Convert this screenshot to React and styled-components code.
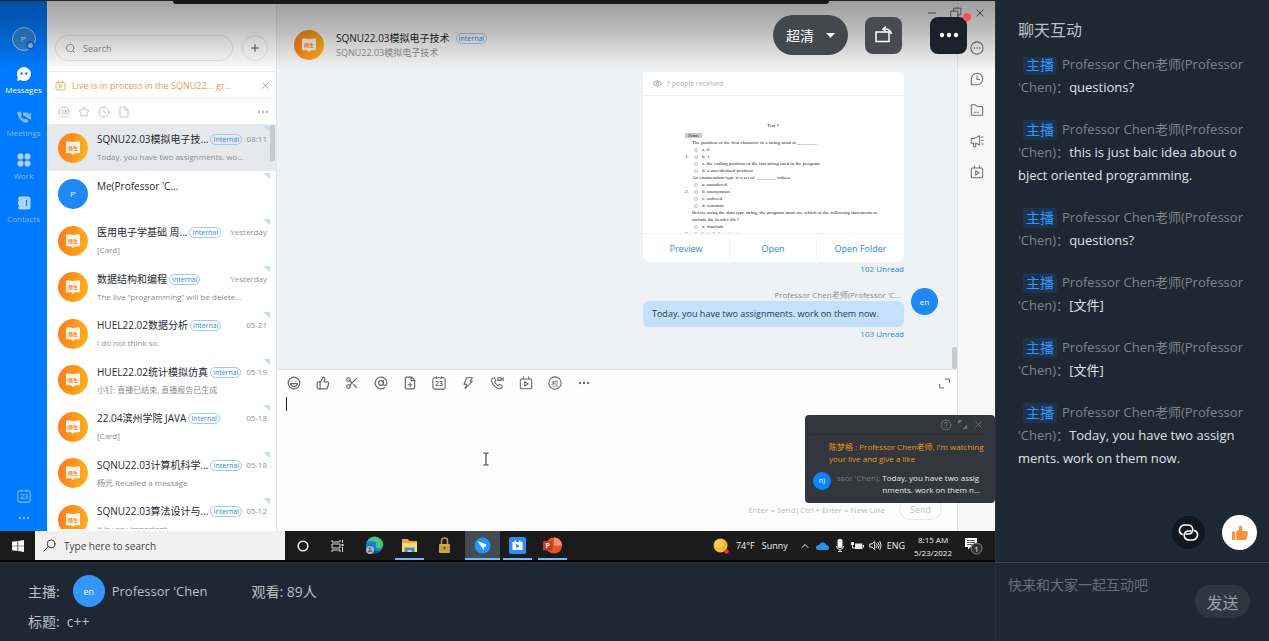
import styled, { createGlobalStyle, css } from "styled-components";
import {
  AtSign,
  ChevronUp,
  Clock,
  File,
  FilePlus,
  Laugh,
  Minus,
  MoreHorizontal,
  Plus,
  Scissors,
  Search,
  Star,
  ThumbsUp,
  X,
} from "lucide-react";

const GlobalStyle = createGlobalStyle`
  * {
    box-sizing: border-box;
  }
  body {
    margin: 0;
    background: #1e2832;
    font-family: "Open Sans", "Noto Sans CJK SC", sans-serif;
  }
  button, input, textarea {
    font-family: inherit;
    margin: 0;
  }
  svg {
    display: block;
    flex: none;
  }
`;

const Page = styled.div`
  display: grid;
  grid-template-columns: minmax(0, 1fr) 274px;
  grid-template-rows: minmax(0, 1fr);
  height: 100vh;
`;

const Main = styled.main`
  display: flex;
  flex-direction: column;
  min-width: 0;
`;

const IconButton = styled.button`
  display: flex;
  align-items: center;
  justify-content: center;
  padding: 0;
  border: 0;
  background: none;
  color: inherit;
  cursor: pointer;
`;

/* video */

const Video = styled.section`
  position: relative;
  flex: 1;
  min-height: 0;
  display: flex;
  flex-direction: column;
  border-top: 1px solid #222;
  border-bottom: 2px solid #050505;
`;

const Desktop = styled.div`
  flex: 1;
  min-height: 0;
  display: flex;
  background: #fdfdfd;
`;

const Shade = styled.div`
  position: absolute;
  inset: 0 0 auto;
  height: 70px;
  background: linear-gradient(rgba(0, 0, 0, 0.36), rgba(0, 0, 0, 0.24) 40%, rgba(0, 0, 0, 0));
  pointer-events: none;
`;

const TopStrip = styled.div`
  position: absolute;
  top: -1px;
  left: 173px;
  right: 166px;
  height: 4px;
  border-radius: 0 0 3px 3px;
  background: #191919;
`;

const PlayerControls = styled.div`
  position: absolute;
  top: 14px;
  right: 28px;
  display: flex;
  align-items: center;
`;

const QualityButton = styled.button`
  display: flex;
  align-items: center;
  justify-content: center;
  gap: 12px;
  width: 75px;
  height: 40px;
  margin-right: 17px;
  padding: 0;
  border: 0;
  border-radius: 20px;
  background: #43484f;
  color: #fff;
  font-size: 14px;
`;

const SquareButton = styled(IconButton)`
  position: relative;
  width: 37px;
  height: 37px;
  margin-right: ${(props) => (props.$dark ? 0 : 28)}px;
  border-radius: 8px;
  background: ${(props) => (props.$dark ? "#1b212a" : "#484c52")};
  color: #fff;
`;

const RedDot = styled.span`
  position: absolute;
  top: -4px;
  right: -4px;
  width: 8px;
  height: 8px;
  border-radius: 50%;
  background: #ff4d4f;
`;

/* left rail */

const Rail = styled.nav`
  width: 47px;
  display: flex;
  flex-direction: column;
  align-items: center;
  padding: 26px 0 6px;
  background: #007bff;
`;

const RailAvatar = styled.div`
  position: relative;
  display: flex;
  align-items: center;
  justify-content: center;
  width: 24px;
  height: 24px;
  margin-bottom: 13px;
  border: 1px solid #a5ccf2;
  border-radius: 50%;
  background: #2f86dc;
  color: #cfe5fb;
  font-size: 7px;
`;

const RailBadge = styled.span`
  position: absolute;
  right: 0;
  bottom: 0;
  width: 9px;
  height: 9px;
  border: 2px solid #0d6cd2;
  border-radius: 50%;
  background: #8fc2f5;
`;

const RailItem = styled.button`
  display: flex;
  flex-direction: column;
  align-items: center;
  gap: 2px;
  width: 47px;
  height: 43px;
  padding: 2px 0 0;
  border: 0;
  background: none;
  color: ${(props) => (props.$active ? "#fff" : "#7fbdff")};
  font-size: 8px;
  line-height: 12px;
`;

const RailBottom = styled.div`
  margin-top: auto;
  display: flex;
  flex-direction: column;
  align-items: center;
  gap: 8px;
  color: #7fbdff;
`;

/* conversations */

const Sidebar = styled.aside`
  width: 230px;
  display: flex;
  flex-direction: column;
  border-right: 1px solid #e4e6e8;
  background: #fff;
`;

const SearchRow = styled.div`
  display: flex;
  align-items: center;
  gap: 9px;
  height: 71px;
  padding: 24px 8px 0;
  border-bottom: 1px solid #e9eaec;
`;

const SearchBox = styled.label`
  flex: 1;
  display: flex;
  align-items: center;
  gap: 7px;
  height: 26px;
  padding: 0 9px;
  border: 1px solid #e6e8ea;
  border-radius: 13px;
  color: #8b8e92;
`;

const PlainInput = styled.input`
  flex: 1;
  min-width: 0;
  padding: 0;
  border: 0;
  outline: 0;
  background: none;
  font-size: ${(props) => props.$size || 9}px;
  color: #333;
  &::placeholder {
    color: ${(props) => props.$hint || "#8b8e92"};
    opacity: 1;
  }
`;

const AddButton = styled(IconButton)`
  width: 26px;
  height: 26px;
  border: 1px solid #e6e8ea;
  border-radius: 50%;
  color: #555;
`;

const LiveBanner = styled.div`
  display: flex;
  align-items: center;
  gap: 6px;
  height: 27px;
  margin: 0 5px 0 8px;
  border-bottom: 1px solid #eceef0;
  color: #ee9b52;
  font-size: 9px;
  white-space: nowrap;
`;

const CloseButton = styled(IconButton)`
  margin-left: auto;
  color: #8f9296;
`;

const FilterRow = styled.div`
  display: flex;
  align-items: center;
  gap: 8px;
  height: 25px;
  padding: 0 6px 0 11px;
  color: #c0c3c6;
`;

const FilterMore = styled(IconButton)`
  margin-left: auto;
  color: #a3b0bd;
`;

const ConversationList = styled.ul`
  position: relative;
  flex: 1;
  min-height: 0;
  margin: 0 0 2px;
  padding: 0;
  overflow: hidden;
  list-style: none;
`;

const Conversation = styled.li`
  position: relative;
  display: flex;
  align-items: center;
  gap: 9px;
  height: 47px;
  padding: 0 9px 0 11px;
  background: ${(props) => (props.$active ? "#e6e8eb" : "transparent")};
  &:nth-child(even) {
    height: 46px;
  }
  &::after {
    content: "";
    position: absolute;
    top: 2px;
    right: 6px;
    border-top: 6px solid #c5def4;
    border-left: 7px solid transparent;
  }
`;

const Avatar = styled.div`
  flex: none;
  display: flex;
  align-items: center;
  justify-content: center;
  width: ${(props) => props.$size}px;
  height: ${(props) => props.$size}px;
  border-radius: 50%;
  background: ${(props) =>
    props.$group ? "linear-gradient(100deg, #fb7a1e, #ffae1c 90%)" : props.$color || "#1e88f5"};
  color: #fff;
  font-size: ${(props) => props.$font || 7}px;
`;

const ConversationBody = styled.div`
  flex: 1;
  min-width: 0;
  align-self: flex-start;
  padding-top: 7px;
`;

const ConversationTop = styled.div`
  display: flex;
  align-items: center;
  gap: 2px;
  height: 16px;
`;

const ConversationName = styled.span`
  color: #26292d;
  font-size: 10px;
  line-height: 16px;
  white-space: nowrap;
`;

const Tag = styled.span`
  flex: none;
  height: 11px;
  padding: 0 2px;
  border: 1px solid #9cc9f5;
  border-radius: 6px;
  color: #2b8cee;
  font-size: 7px;
  line-height: 9px;
`;

const Time = styled.time`
  margin-left: auto;
  color: #8f9296;
  font-size: 8px;
  line-height: 16px;
  white-space: nowrap;
`;

const LastMessage = styled.p`
  margin: 3px 0 0;
  color: #8a8d91;
  font-size: 8px;
  line-height: 14px;
  white-space: nowrap;
`;

const Thumb = styled.span`
  position: absolute;
  z-index: 1;
  right: ${(props) => props.$right}px;
  ${(props) => (props.$bottom ? "bottom: 0;" : "top: 1px;")}
  width: 5px;
  height: ${(props) => props.$height}px;
  border-radius: 2px;
  background: #c8cacc;
`;

/* chat */

const Chat = styled.section`
  flex: 1;
  min-width: 0;
  display: flex;
  flex-direction: column;
`;

const ChatHeader = styled.header`
  display: flex;
  align-items: center;
  gap: 12px;
  height: 66px;
  padding: 22px 17px 0;
  background: #f5f5f5;
`;

const ChatTitle = styled.h1`
  display: flex;
  align-items: center;
  gap: 6px;
  margin: 0;
  color: #1c1e20;
  font-size: 10px;
  font-weight: 400;
  line-height: 16px;
`;

const ChatSubtitle = styled.p`
  margin: 0;
  color: #8f9296;
  font-size: 9px;
  line-height: 14px;
`;

const MessageArea = styled.div`
  position: relative;
  flex: 1;
  min-height: 0;
  overflow: hidden;
  padding: 5px 19px 0;
  border-bottom: 1px solid #e3e6e8;
  background: #eff2f4;
  display: flex;
  flex-direction: column;
  align-items: flex-end;
`;

const MessageColumn = styled.div`
  display: flex;
  flex-direction: column;
  align-items: flex-end;
  width: 261px;
  margin-right: 34px;
`;

const FileCard = styled.article`
  width: 100%;
  border-radius: 4px 4px 8px 8px;
  background: #fff;
`;

const Received = styled.div`
  display: flex;
  align-items: center;
  gap: 5px;
  height: 24px;
  padding: 0 10px;
  border-bottom: 1px solid #f0f1f2;
  color: #b0b2b5;
  font-size: 7px;
`;

const Paper = styled.div`
  height: 138px;
  overflow: hidden;
  padding: 26px 10px 0 42px;
  border-bottom: 1px solid #f0f1f2;
  color: #222;
  font-family: "Liberation Serif", serif;
  font-size: 5px;
  line-height: 7px;
`;

const PaperTitle = styled.h2`
  margin: 0 33px 4px 0;
  font-size: 5px;
  font-weight: 400;
  text-align: center;
`;

const PaperTag = styled.div`
  width: 17px;
  height: 5px;
  margin-bottom: 1px;
  background: #c9cbd6;
  font-size: 4px;
  line-height: 5px;
  text-align: center;
`;

const Question = styled.fieldset`
  display: grid;
  grid-template-columns: 7px 1fr;
  align-items: center;
  margin: 0;
  padding: 0;
  border: 0;
`;

const QuestionText = styled.div`
  grid-column: 2;
  white-space: pre-line;
`;

const Option = styled.label`
  display: flex;
  align-items: center;
  gap: 4px;
  padding-left: 2px;
  height: 7px;
`;

const Radio = styled.input`
  appearance: none;
  width: 4px;
  height: 4px;
  border: 1px solid #c3c3c3;
  border-radius: 50%;
  margin: 0;
`;

const CardActions = styled.div`
  display: grid;
  grid-template-columns: repeat(3, 1fr);
  height: 28px;
  padding: 4px 0;
`;

const CardAction = styled.button`
  padding: 0;
  border: 0;
  border-right: 1px solid #f0f1f2;
  background: none;
  color: #2f86e8;
  font-size: 9px;
  &:last-child {
    border-right: 0;
  }
`;

const Unread = styled.a`
  color: #2f86e8;
  font-size: 8px;
  line-height: 13px;
  text-decoration: none;
`;

const SentMessage = styled.div`
  display: flex;
  gap: 7px;
  margin-top: 13px;
`;

const SentColumn = styled.div`
  display: flex;
  flex-direction: column;
  align-items: flex-end;
  width: 261px;
`;

const Sender = styled.div`
  padding-right: 3px;
  color: #8a8d91;
  font-size: 8px;
  line-height: 13px;
  white-space: nowrap;
`;

const Bubble = styled.p`
  width: 100%;
  margin: 0;
  padding: 0 9px;
  border-radius: 6px;
  background: #c3e1fd;
  color: #26394c;
  font-size: 9px;
  line-height: 26px;
  white-space: nowrap;
`;

const Editor = styled.div`
  position: relative;
  height: 161px;
  display: flex;
  flex-direction: column;
  background: #fdfdfd;
`;

const EditorTools = styled.div`
  display: flex;
  align-items: center;
  gap: 15px;
  height: 26px;
  padding: 0 6px 0 10px;
  color: #63666a;
`;

const ExpandButton = styled(IconButton)`
  margin-left: auto;
`;

const EditorInput = styled.label`
  flex: 1;
  display: flex;
  padding: 1px 9px;
`;

const Caret = styled.span`
  width: 1px;
  height: 14px;
  background: #222;
`;

const EditorText = styled.textarea`
  flex: 1;
  padding: 0 4px;
  border: 0;
  outline: 0;
  resize: none;
  background: none;
  font-size: 10px;
`;

const IBeam = styled.svg`
  position: absolute;
  left: 205px;
  top: 82px;
`;

const EditorFooter = styled.div`
  display: flex;
  align-items: center;
  justify-content: flex-end;
  gap: 14px;
  padding: 0 15px 11px;
  color: #b9bcc0;
  font-size: 8px;
`;

const SendButton = styled.button`
  width: 43px;
  height: 22px;
  border: 1px solid #e3e5e7;
  border-radius: 11px;
  background: #fff;
  color: #bfc2c5;
  font-size: 9px;
`;

const SideTools = styled.div`
  width: 38px;
  display: flex;
  flex-direction: column;
  align-items: center;
  gap: 17px;
  padding-top: 40px;
  border-left: 1px solid #e1e3e5;
  background: #f7f7f7;
  color: #6e7175;
`;

const WindowButtons = styled.div`
  position: absolute;
  top: 6px;
  right: 9px;
  display: flex;
  gap: 12px;
  color: #5e5e5e;
`;

/* live popup */

const Popup = styled.div`
  position: absolute;
  right: 0;
  bottom: 57px;
  width: 190px;
  height: 88px;
  border-radius: 4px;
  background: #33363c;
  color: #e8e9ea;
  font-size: 8px;
  line-height: 12px;
`;

const PopupHead = styled.div`
  display: flex;
  align-items: center;
  justify-content: flex-end;
  gap: 5px;
  height: 20px;
  margin: 0 11px 0 5px;
  border-bottom: 1px solid #2b2e34;
  color: #74777c;
`;

const PopupNotice = styled.p`
  margin: 6px 10px 7px 24px;
  color: #e39a1b;
  white-space: pre;
`;

const PopupMessage = styled.div`
  display: flex;
  gap: 6px;
  padding-left: 8px;
`;

const PopupName = styled.span`
  margin-right: -4px;
  color: #777a80;
  white-space: nowrap;
`;

const PopupText = styled.p`
  margin: 0;
  white-space: pre;
`;

/* taskbar */

const Taskbar = styled.footer`
  display: flex;
  height: 29px;
  background: #1b1b1b;
  color: #f1f1f1;
`;

const StartButton = styled(IconButton)`
  width: 35px;
`;

const TaskSearch = styled.label`
  display: flex;
  align-items: center;
  gap: 8px;
  width: 250px;
  padding: 0 8px;
  background: #f1f1f1;
  color: #333;
`;

const TaskItem = styled(IconButton)`
  position: relative;
  width: 35px;
  margin-left: ${(props) => props.$gap || 0}px;
  background: ${(props) => (props.$active ? "#454b52" : "none")};
  ${(props) =>
    props.$open &&
    css`
      &::after {
        content: "";
        position: absolute;
        bottom: 0;
        left: ${props.$active ? 0 : 3}px;
        right: ${props.$active ? 0 : 3}px;
        height: 2px;
        background: #76b9ed;
      }
    `}
`;

const Tray = styled.div`
  display: flex;
  align-items: center;
  gap: 5px;
  margin-left: auto;
  padding-right: 12px;
  font-size: 9px;
  white-space: nowrap;
`;

const Weather = styled.span`
  display: flex;
  align-items: center;
  gap: 7px;
  margin-right: 6px;
`;

const ClockText = styled.time`
  margin: 0 7px 0 4px;
  font-size: 8px;
  line-height: 13px;
  text-align: center;
`;

/* stream info */

const StreamInfo = styled.section`
  height: 79px;
  padding: 12px 0 0 28px;
  color: #b9c0c6;
  font-size: 14px;
`;

const InfoRow = styled.div`
  display: flex;
  align-items: center;
  height: ${(props) => props.$height}px;
  gap: 7px;
`;

const HostAvatar = styled(Avatar)`
  margin-left: 6px;
`;

const HostName = styled.span`
  font-size: 13px;
`;

const Viewers = styled.span`
  margin-left: 37px;
`;

/* comments */

const Comments = styled.aside`
  display: flex;
  flex-direction: column;
  min-height: 0;
  border-left: 1px solid #2a343e;
`;

const CommentsTitle = styled.h2`
  flex: none;
  height: 57px;
  margin: 0;
  padding: 18px 22px 0;
  color: #b9c0c6;
  font-size: 16px;
  font-weight: 400;
  line-height: 24px;
`;

const CommentList = styled.div`
  position: relative;
  flex: 1;
  min-height: 0;
  overflow: hidden;
  display: flex;
  flex-direction: column;
  justify-content: flex-end;
  gap: 19px;
  padding: 0 16px 92px 22px;
`;

const Comment = styled.div`
  flex: none;
  color: #dfe3e6;
  font-size: 13px;
  line-height: 23px;
  white-space: pre;
`;

const CommentLine = styled.div`
  display: flex;
  align-items: center;
  height: 23px;
`;

const Host = styled.span`
  margin: 0 5px;
  padding: 0 3px;
  border-radius: 3px;
  background: #1c3450;
  color: #3296fa;
  font-size: 14px;
  line-height: 20px;
`;

const Author = styled.span`
  color: #7b858e;
`;

const RoundActions = styled.div`
  position: absolute;
  right: 12px;
  bottom: 12px;
  display: flex;
  align-items: center;
  gap: 17px;
`;

const RoundButton = styled(IconButton)`
  width: ${(props) => props.$size}px;
  height: ${(props) => props.$size}px;
  border-radius: 50%;
  background: ${(props) => (props.$light ? "#fff" : "#10171e")};
  color: ${(props) => (props.$light ? "#ff8f3a" : "#fff")};
`;

const CommentForm = styled.form`
  flex: none;
  display: flex;
  height: 79px;
  padding: 11px 19px 0 12px;
  border-top: 1px solid #36414b;
`;

const CommentInput = styled.textarea`
  flex: 1;
  min-width: 0;
  padding: 0;
  border: 0;
  outline: 0;
  resize: none;
  background: none;
  color: #dfe3e6;
  font-size: 14px;
  line-height: 22px;
  &::placeholder {
    color: #66717a;
    opacity: 1;
  }
`;

const CommentSend = styled.button`
  width: 55px;
  height: 33px;
  margin-top: 11px;
  padding: 0;
  border: 0;
  border-radius: 17px;
  background: #2d3740;
  color: #99a1a8;
  font-size: 16px;
`;

const conversations = [
  { name: "SQNU22.03模拟电子技...", tag: true, time: "08:11", last: "Today, you have two assignments. wo...", active: true },
  { name: "Me(Professor 'C...", time: "", last: "", me: true },
  { name: "医用电子学基础 周...", tag: true, time: "Yesterday", last: "[Card]" },
  { name: "数据结构和编程", tag: true, time: "Yesterday", last: "The live “programming” will be delete..." },
  { name: "HUEL22.02数据分析", tag: true, time: "05-21", last: "I do not think so." },
  { name: "HUEL22.02统计模拟仿真", tag: true, time: "05-19", last: "小钉: 直播已结束, 直播报告已生成" },
  { name: "22.04滨州学院 JAVA", tag: true, time: "05-18", last: "[Card]" },
  { name: "SQNU22.03计算机科学...", tag: true, time: "05-18", last: "杨光 Recalled a message" },
  { name: "SQNU22.03算法设计与...", tag: true, time: "05-12", last: "it is very important" },
];

const questions = [
  {
    text: "The position of the first character in a string must at ________",
    options: ["a. 0", "b. 1", "c. the ending position of the last string used in the program", "d. a user-defined position"],
  },
  {
    text: "An enumeration type is a set of ________ values.",
    options: ["a. unordered", "b. anonymous", "c. ordered", "d. constant"],
  },
  {
    text: "Before using the data type string, the program must use which of the following statements to\ninclude the header file?",
    options: ["a. #include", "b. include <string>"],
  },
];

// first line follows the author on the same row
const comments = [
  ["questions?"],
  ["this is just baic idea about o", "bject oriented programming."],
  ["questions?"],
  ["[文件]"],
  ["[文件]"],
  ["Today, you have two assign", "ments. work on them now."],
];

function Icon({ size = 14, children, ...rest }) {
  return (
    <svg
      width={size}
      height={size}
      viewBox="0 0 16 16"
      fill="none"
      stroke="currentColor"
      strokeWidth="1.2"
      strokeLinecap="round"
      strokeLinejoin="round"
      {...rest}
    >
      {children}
    </svg>
  );
}

function GroupIcon() {
  return (
    <svg width="16" height="16" viewBox="0 0 16 16">
      <path d="M1 2.500Q1 1 2.500 1.200L8 2l5.500-.8Q15 1 15 2.500V12q0 1.300-1.300 1.300H10L8 15l-2-1.700H2.300Q1 13.300 1 12z" fill="#fff4e4" />
      <text x="8" y="9.500" fontSize="5" textAnchor="middle" fill="#f5831f" fontWeight="700">
        师生
      </text>
    </svg>
  );
}

function TvIcon({ size }) {
  return (
    <Icon size={size}>
      <rect x="1.500" y="3.500" width="13" height="11" rx="1.500" />
      <path d="M5 1v2.500M11 1v2.500M6.500 6.500v5l4-2.500z" />
    </Icon>
  );
}

function CalendarIcon({ size }) {
  return (
    <Icon size={size}>
      <rect x="1" y="2" width="14" height="13" rx="2" />
      <path d="M5 1v2M11 1v2" />
      <text x="8" y="11.500" fontSize="8" fontWeight="600" textAnchor="middle" fill="currentColor" stroke="none">
        23
      </text>
    </Icon>
  );
}

const PhonePath = () => (
  <path d="M3 2.500 5 2l1.800 3.300L5.300 7q1 2.500 3.800 4l1.700-1.500L14 11.300l-.5 2Q12.500 15 10 14.300 3.500 12 1.700 5.500 1.500 3.500 3 2.500z" />
);

function RailNav() {
  return (
    <Rail>
      <RailAvatar>
        P'
        <RailBadge />
      </RailAvatar>
      <RailItem $active>
        <svg width="16" height="16" viewBox="0 0 16 16">
          <path d="M8 1a7 7 0 1 1-3.500 13.100L1.200 15l.5-4A7 7 0 0 1 8 1z" fill="#fff" />
          <circle cx="5.600" cy="7.500" r="1.200" fill="#007bff" />
          <circle cx="10.400" cy="7.500" r="1.200" fill="#007bff" />
        </svg>
        Messages
      </RailItem>
      <RailItem>
        <svg width="16" height="16" viewBox="0 0 16 16" fill="currentColor">
          <path d="M1 3.500 4.500 2.500 6 6 5 7.500q1 2 3 3L9.500 9.500 12.500 11.500 11 14Q3.500 14 1 3.500z" />
          <path d="M7 3.500h5v1.700l3-1.500v7l-3-1.500L7 6z" />
        </svg>
        Meetings
      </RailItem>
      <RailItem>
        <svg width="16" height="16" viewBox="0 0 16 16" fill="#a9d3ff">
          <rect x="1.500" y="1.500" width="6" height="6" rx="2.800" />
          <rect x="8.500" y="1.500" width="6" height="6" rx="2.800" />
          <rect x="1.500" y="8.500" width="6" height="6" rx="2.800" />
          <rect x="8.500" y="8.500" width="6" height="6" rx="2.800" />
        </svg>
        Work
      </RailItem>
      <RailItem>
        <svg width="16" height="16" viewBox="0 0 16 16">
          <rect x="2" y="1.500" width="12.500" height="13" rx="2.500" fill="#a9d3ff" />
          <path d="M10.500 5v6M1 5h2M1 11h2" stroke="#1e7fe8" strokeWidth="1.300" />
        </svg>
        Contacts
      </RailItem>
      <RailBottom>
        <CalendarIcon size={14} />
        <MoreHorizontal size={14} />
      </RailBottom>
    </Rail>
  );
}

function Conversations() {
  return (
    <Sidebar>
      <SearchRow>
        <SearchBox>
          <Search size={11} />
          <PlainInput placeholder="Search" aria-label="Search" />
        </SearchBox>
        <AddButton aria-label="New chat">
          <Plus size={12} />
        </AddButton>
      </SearchRow>
      <LiveBanner>
        <TvIcon size={11} />
        Live is in process in the SQNU22... gr...
        <CloseButton aria-label="Dismiss">
          <X size={11} strokeWidth={1.5} />
        </CloseButton>
      </LiveBanner>
      <FilterRow>
        <AtSign size={12} />
        <Star size={12} />
        <Clock size={12} />
        <File size={12} />
        <FilterMore aria-label="More filters">
          <MoreHorizontal size={14} />
        </FilterMore>
      </FilterRow>
      <ConversationList>
        {conversations.map((c) => (
          <Conversation key={c.name} $active={c.active}>
            <Avatar $size={30} $group={!c.me}>
              {c.me ? "P'" : <GroupIcon />}
            </Avatar>
            <ConversationBody>
              <ConversationTop>
                <ConversationName>{c.name}</ConversationName>
                {c.tag && <Tag>Internal</Tag>}
                <Time>{c.time}</Time>
              </ConversationTop>
              <LastMessage>{c.last}</LastMessage>
            </ConversationBody>
          </Conversation>
        ))}
        <Thumb as="li" $right={1} $height={36} />
      </ConversationList>
    </Sidebar>
  );
}

function QuestionLine({ number, group, text }) {
  return (
    <>
      <span>{number}</span>
      <Option>
        <Radio type="radio" name={group} />
        {text}
      </Option>
    </>
  );
}

function TestPaper() {
  return (
    <Paper>
      <PaperTitle>Test 7</PaperTitle>
      <PaperTag>Points</PaperTag>
      {questions.map((q, i) => (
        <Question key={q.text}>
          <QuestionText>{q.text}</QuestionText>
          {q.options.map((o, j) => (
            <QuestionLine key={o} number={j === 1 ? i + 1 + "." : ""} group={"q" + i} text={o} />
          ))}
        </Question>
      ))}
    </Paper>
  );
}

function ChatPanel() {
  return (
    <Chat>
      <ChatHeader>
        <Avatar $size={30} $group>
          <GroupIcon />
        </Avatar>
        <div>
          <ChatTitle>
            SQNU22.03模拟电子技术 <Tag>Internal</Tag>
          </ChatTitle>
          <ChatSubtitle>SQNU22.03模拟电子技术</ChatSubtitle>
        </div>
      </ChatHeader>
      <MessageArea>
        <MessageColumn>
          <FileCard>
            <Received>
              <Icon size={9} strokeWidth="2">
                <path d="M1 8q7-10 14 0-7 10-14 0z" />
                <circle cx="8" cy="8" r="2" />
              </Icon>
              ? people received
            </Received>
            <TestPaper />
            <CardActions>
              <CardAction>Preview</CardAction>
              <CardAction>Open</CardAction>
              <CardAction>Open Folder</CardAction>
            </CardActions>
          </FileCard>
          <Unread href="#">102 Unread</Unread>
        </MessageColumn>
        <SentMessage>
          <SentColumn>
            <Sender>Professor Chen老师(Professor 'C...</Sender>
            <Bubble>Today. you have two assignments. work on them now.</Bubble>
            <Unread href="#">103 Unread</Unread>
          </SentColumn>
          <Avatar $size={27} $font={8}>
            en
          </Avatar>
        </SentMessage>
        <Thumb $right={0} $height={22} $bottom />
      </MessageArea>
      <Editor>
        <EditorTools>
          <Laugh size={14} />
          <ThumbsUp size={14} />
          <Scissors size={14} />
          <AtSign size={14} />
          <FilePlus size={14} />
          <CalendarIcon size={14} />
          <Icon>
            <path d="M6.500 2h6.500L10.500 6H13L4.500 14.500 6.500 9.500H3.500z" />
          </Icon>
          <Icon>
            <PhonePath />
            <path d="M9 2h3.500v3H9zM12.500 3l2.500-1v3l-2.500-1" />
          </Icon>
          <TvIcon size={14} />
          <Icon>
            <circle cx="8" cy="8" r="7" />
            <text x="8" y="11" fontSize="8" textAnchor="middle" fill="currentColor" stroke="none">
              校
            </text>
          </Icon>
          <MoreHorizontal size={14} />
          <ExpandButton aria-label="Expand">
            <Icon size={13}>
              <path d="M9 2.500h5V7M2 9v4.500h5" />
            </Icon>
          </ExpandButton>
        </EditorTools>
        <EditorInput>
          <Caret />
          <EditorText aria-label="Message" />
        </EditorInput>
        <EditorFooter>
          Enter = Send|Ctrl + Enter = New Line
          <SendButton>Send</SendButton>
        </EditorFooter>
        <IBeam width="8" height="14" viewBox="0 0 8 14" fill="none" stroke="#222">
          <path d="M1.500 1h2l.5.5.5-.5h2M4 1.500v11M1.500 13h2l.5-.5.5.5h2" />
        </IBeam>
      </Editor>
    </Chat>
  );
}

function ToolStrip() {
  return (
    <SideTools>
      <Icon>
        <circle cx="8" cy="8" r="7" />
        <path d="M4.800 8h.2M8 8h.1M11 8h.2" strokeWidth="1.800" />
      </Icon>
      <Icon>
        <path d="M1.500 14.500V8A6.500 6.500 0 1 1 8 14.500z" />
        <path d="M8 4.500V8.500h3" />
      </Icon>
      <Icon>
        <path d="M1.500 3q0-1 1-1H6l2 2h5.500q1 0 1 1v8q0 1-1 1h-11q-1 0-1-1z" />
        <path d="M5 10.500h6" strokeDasharray="1.500 1.500" />
      </Icon>
      <Icon>
        <path d="M1.500 5h3.500l6-3v10.500l-4-2h-.5v4H4v-4H1.500z" />
        <path d="M13.500 3.500h1.500M13.500 7.500h1.500M13.500 11.500h1.500" />
      </Icon>
      <TvIcon />
    </SideTools>
  );
}

function LivePopup() {
  return (
    <Popup>
      <PopupHead>
        <Icon size={12}>
          <circle cx="8" cy="8" r="6.500" />
          <path d="M6 6.500q0-2 2-2t2 1.700Q10 7 8 8.500v.5M8 11.300v.1" />
        </Icon>
        <Icon size={11}>
          <path d="M2 6V2h4zM14 10v4h-4z" fill="currentColor" />
        </Icon>
        <X size={11} />
      </PopupHead>
      <PopupNotice>{"陈梦格 : Professor Chen老师, I'm watching\nyour live and give a like"}</PopupNotice>
      <PopupMessage>
        <Avatar $size={18} $color="#0a84ff">
          n)
        </Avatar>
        <PopupName>ssor 'Chen):</PopupName>
        <PopupText>{"Today, you have two assig\nnments. work on them n..."}</PopupText>
      </PopupMessage>
    </Popup>
  );
}

function WindowsTaskbar() {
  return (
    <Taskbar>
      <StartButton aria-label="Start">
        <svg width="12" height="12" viewBox="0 0 12 12" fill="#fff">
          <path d="M0 1.700 5.500 1v4.700H0zM6.200.9 12 0v5.700H6.200zM0 6.300h5.500V11L0 10.300zM6.200 6.300H12V12l-5.800-.9z" />
        </svg>
      </StartButton>
      <TaskSearch>
        <Icon size={13}>
          <circle cx="10" cy="6" r="4.800" />
          <path d="M6.500 9.500 1 15" />
        </Icon>
        <PlainInput placeholder="Type here to search" aria-label="Type here to search" $size={10} $hint="#444" />
      </TaskSearch>
      <TaskItem aria-label="Cortana">
        <svg width="12" height="12" viewBox="0 0 12 12">
          <circle cx="6" cy="6" r="4.800" fill="none" stroke="#eee" strokeWidth="1.600" />
        </svg>
      </TaskItem>
      <TaskItem aria-label="Task view">
        <svg width="13" height="12" viewBox="0 0 13 12" fill="none" stroke="#ddd">
          <path d="M1 0v2h8V0M1 12v-2h8v2M1 4h8v4H1zM11.500 0v3M11.500 7v5" />
          <path d="M11.500 4v2" strokeWidth="2" />
        </svg>
      </TaskItem>
      <TaskItem aria-label="Edge" $gap={2}>
        <svg width="19" height="19" viewBox="0 0 19 19">
          <circle cx="9.500" cy="9" r="8.500" fill="#1783d8" />
          <path d="M2 6Q6-1 13 1.500q6 3 5 8-1 3-5 3-3-.5-1.500-3Q12 5 7 5 4 5 2 6z" fill="#4cc76a" />
          <path d="M7 9q-1 6 8 6-3 3-7 2.300Q3 15 4 10z" fill="#114d91" />
          <circle cx="5" cy="14" r="4" fill="#a9b6c2" />
          <path d="M3 16q0-2 2-2t2 2z" fill="#596672" />
          <circle cx="5" cy="12.600" r="1.200" fill="#596672" />
        </svg>
      </TaskItem>
      <TaskItem aria-label="Explorer" $open>
        <svg width="17" height="14" viewBox="0 0 17 14">
          <path d="M1 0h6l1.500 2H16v11H1z" fill="#e9a929" />
          <path d="M1 4h15v9H1z" fill="#ffd970" />
          <path d="M3.500 13V8.500h10V13h-3v-1.800h-4V13z" fill="#3b8fd6" />
        </svg>
      </TaskItem>
      <TaskItem aria-label="Lock">
        <svg width="13" height="17" viewBox="0 0 13 17">
          <path d="M3.500 9V4q0-3 3-3t3 3v5" fill="none" stroke="#b59a4d" strokeWidth="1.600" />
          <rect x="1" y="7" width="11" height="9" rx="1" fill="#d2aa40" />
          <path d="M1 10h11M1 13h11" stroke="#b8922f" />
          <circle cx="6.500" cy="11" r="1.200" fill="#614712" />
        </svg>
      </TaskItem>
      <TaskItem aria-label="DingTalk" $open $active $gap={3}>
        <svg width="17" height="17" viewBox="0 0 17 17">
          <circle cx="8.500" cy="8.500" r="8" fill="#2196f3" />
          <path d="M4 4 12.500 7.500 11.800 9.500l-1.300.3L9.800 13 8 10.500 5.500 7.500z" fill="#fff" />
        </svg>
      </TaskItem>
      <TaskItem aria-label="Live" $open>
        <svg width="17" height="17" viewBox="0 0 17 17">
          <rect width="17" height="17" rx="2" fill="#2f8cf0" />
          <path d="M3.500 5h2V3.500H7V5h3V3.500h1.500V5h2v8h-10z" fill="#fff" />
          <path d="M7.500 7.500 10 9l-2.500 1.500z" fill="#2f8cf0" stroke="#2f8cf0" />
        </svg>
      </TaskItem>
      <TaskItem aria-label="PowerPoint" $open>
        <svg width="19" height="17" viewBox="0 0 19 17">
          <circle cx="11" cy="8.500" r="8" fill="#e2562f" />
          <path d="M11 .5a8 8 0 0 1 8 8h-8z" fill="#ff9173" />
          <rect y="4" width="9.500" height="9.500" rx="1" fill="#c43e1c" />
          <text x="4.800" y="11.200" fontSize="7" fontWeight="700" textAnchor="middle" fill="#fff">
            P
          </text>
        </svg>
      </TaskItem>
      <Tray>
        <Weather>
          <svg width="16" height="16" viewBox="0 0 16 16">
            <circle cx="7.500" cy="7.500" r="7" fill="#fbb62e" />
            <circle cx="6" cy="6" r="4" fill="#ffcf5c" />
            <circle cx="13.500" cy="13.500" r="2.200" fill="#e5382e" />
          </svg>
          <span>74°F</span>
          <span>Sunny</span>
        </Weather>
        <ChevronUp size={12} />
        <svg width="13" height="8" viewBox="0 0 13 8">
          <path d="M3 8Q0 8 0 5.500T3 3Q4 0 7 .5T10 3q3 0 3 2.500T11 8z" fill="#2196e8" />
        </svg>
        <svg width="12" height="13" viewBox="0 0 12 13">
          <rect x="3.500" width="5" height="9" rx="2" fill="#fff" />
          <path d="M2.500 7q0 3.500 3.500 3.500t3.500-3.500M6 10v2.500M4 12.500h4" fill="none" stroke="#ddd" />
        </svg>
        <svg width="13" height="10" viewBox="0 0 13 10">
          <path d="M4 2.500h7.500V8H4zM0 1h3v3H0zM12 4h1v2.500h-1z" fill="#e8e8e8" />
          <path d="M1.500 4v3H4" fill="none" stroke="#e8e8e8" />
        </svg>
        <Icon size={13}>
          <path d="M1.500 6H4l3-3v10l-3-3H1.500zM9.500 6q1.300 2 0 4M11.500 4.500q2.300 3.500 0 7M13.500 3q3 5 0 10" />
        </Icon>
        <span>ENG</span>
        <ClockText>
          8:15 AM
          <br />
          5/23/2022
        </ClockText>
        <svg width="19" height="19" viewBox="0 0 19 19">
          <path d="M1 2h12v9H6.500L4 13.500V11H1z" fill="#fff" />
          <path d="M3 4.500h8M3 6.500h8M3 8.500h6" stroke="#333" strokeWidth=".8" />
          <circle cx="12.500" cy="12.500" r="5.500" fill="#333" stroke="#888" />
          <text x="12.500" y="15.500" fontSize="8" textAnchor="middle" fill="#fff">
            1
          </text>
        </svg>
      </Tray>
    </Taskbar>
  );
}

function CommentPanel() {
  return (
    <Comments>
      <CommentsTitle>聊天互动</CommentsTitle>
      <CommentList>
        {comments.map(([first, ...rest], i) => (
          <Comment key={i}>
            <CommentLine>
              <Host>主播</Host>
              <Author>Professor Chen老师(Professor</Author>
            </CommentLine>
            <CommentLine>
              <Author>'Chen)：</Author>
              {first}
            </CommentLine>
            {rest.map((line) => (
              <CommentLine key={line}>{line}</CommentLine>
            ))}
          </Comment>
        ))}
        <RoundActions>
          <RoundButton $size={33} aria-label="Link">
            <svg width="21" height="19" viewBox="0 0 21 19" fill="none" stroke="currentColor" strokeWidth="1.600" strokeLinecap="round">
              <path d="M4.500 11.500Q1 10 1.500 6.500 2.500 2 7 2h3.500q4 .5 4.300 4.500-.3 4.500-4.800 4.500H8" />
              <path d="M16.500 7.500q3.500 1.500 3 5Q18.500 17 14 17h-3.500q-4-.5-4.300-4.500Q6.500 8 11 8h2" />
            </svg>
          </RoundButton>
          <RoundButton $size={35} $light aria-label="Like">
            <svg width="16" height="16" viewBox="0 0 16 16" fill="currentColor">
              <path d="M0 6.500h3V15H1Q0 15 0 14zM4.200 6.500 7 4.500V2Q7.200.5 8.500.5 10.500.8 10.500 3l-.5 3h4.500Q16 6.200 16 7.700L14.700 13.500Q14.300 15 13 15H4.200z" />
            </svg>
          </RoundButton>
        </RoundActions>
      </CommentList>
      <CommentForm>
        <CommentInput placeholder="快来和大家一起互动吧" aria-label="快来和大家一起互动吧" />
        <CommentSend type="button">发送</CommentSend>
      </CommentForm>
    </Comments>
  );
}

function App() {
  return (
    <Page>
      <GlobalStyle />
      <Main>
        <Video>
          <Desktop>
            <RailNav />
            <Conversations />
            <ChatPanel />
            <ToolStrip />
          </Desktop>
          <WindowsTaskbar />
          <WindowButtons>
            <Minus size={12} />
            <Icon size={12}>
              <path d="M1.500 5.500h9v9h-9zM5 5.500v-4h9.500v9h-4" />
            </Icon>
            <X size={12} />
          </WindowButtons>
          <Shade />
          <TopStrip />
          <PlayerControls>
            <QualityButton>
              超清
              <svg width="9" height="5" viewBox="0 0 9 5">
                <path d="M0 0h9L4.500 5z" fill="#fff" />
              </svg>
            </QualityButton>
            <SquareButton aria-label="Rotate">
              <svg width="18" height="18" viewBox="0 0 18 18" fill="none" stroke="#fff" strokeWidth="1.500">
                <path d="M1 6h13v9.500H1zM8 3.200q7-1 8.500 4.800" />
                <path d="M11 .5 8 3.200l3 2.300" />
              </svg>
            </SquareButton>
            <SquareButton $dark aria-label="More">
              <svg width="20" height="6" viewBox="0 0 20 6" fill="#fff">
                <circle cx="3" cy="3" r="2.200" />
                <circle cx="10" cy="3" r="2.200" />
                <circle cx="17" cy="3" r="2.200" />
              </svg>
              <RedDot />
            </SquareButton>
          </PlayerControls>
          <LivePopup />
        </Video>
        <StreamInfo>
          <InfoRow $height={34}>
            <span>主播:</span>
            <HostAvatar $size={32} $font={9} $color="#3296fa">
              en
            </HostAvatar>
            <HostName>Professor 'Chen</HostName>
            <Viewers>观看: 89人</Viewers>
          </InfoRow>
          <InfoRow $height={26}>
            <span>标题:</span>
            <span>c++</span>
          </InfoRow>
        </StreamInfo>
      </Main>
      <CommentPanel />
    </Page>
  );
}

export default App;
